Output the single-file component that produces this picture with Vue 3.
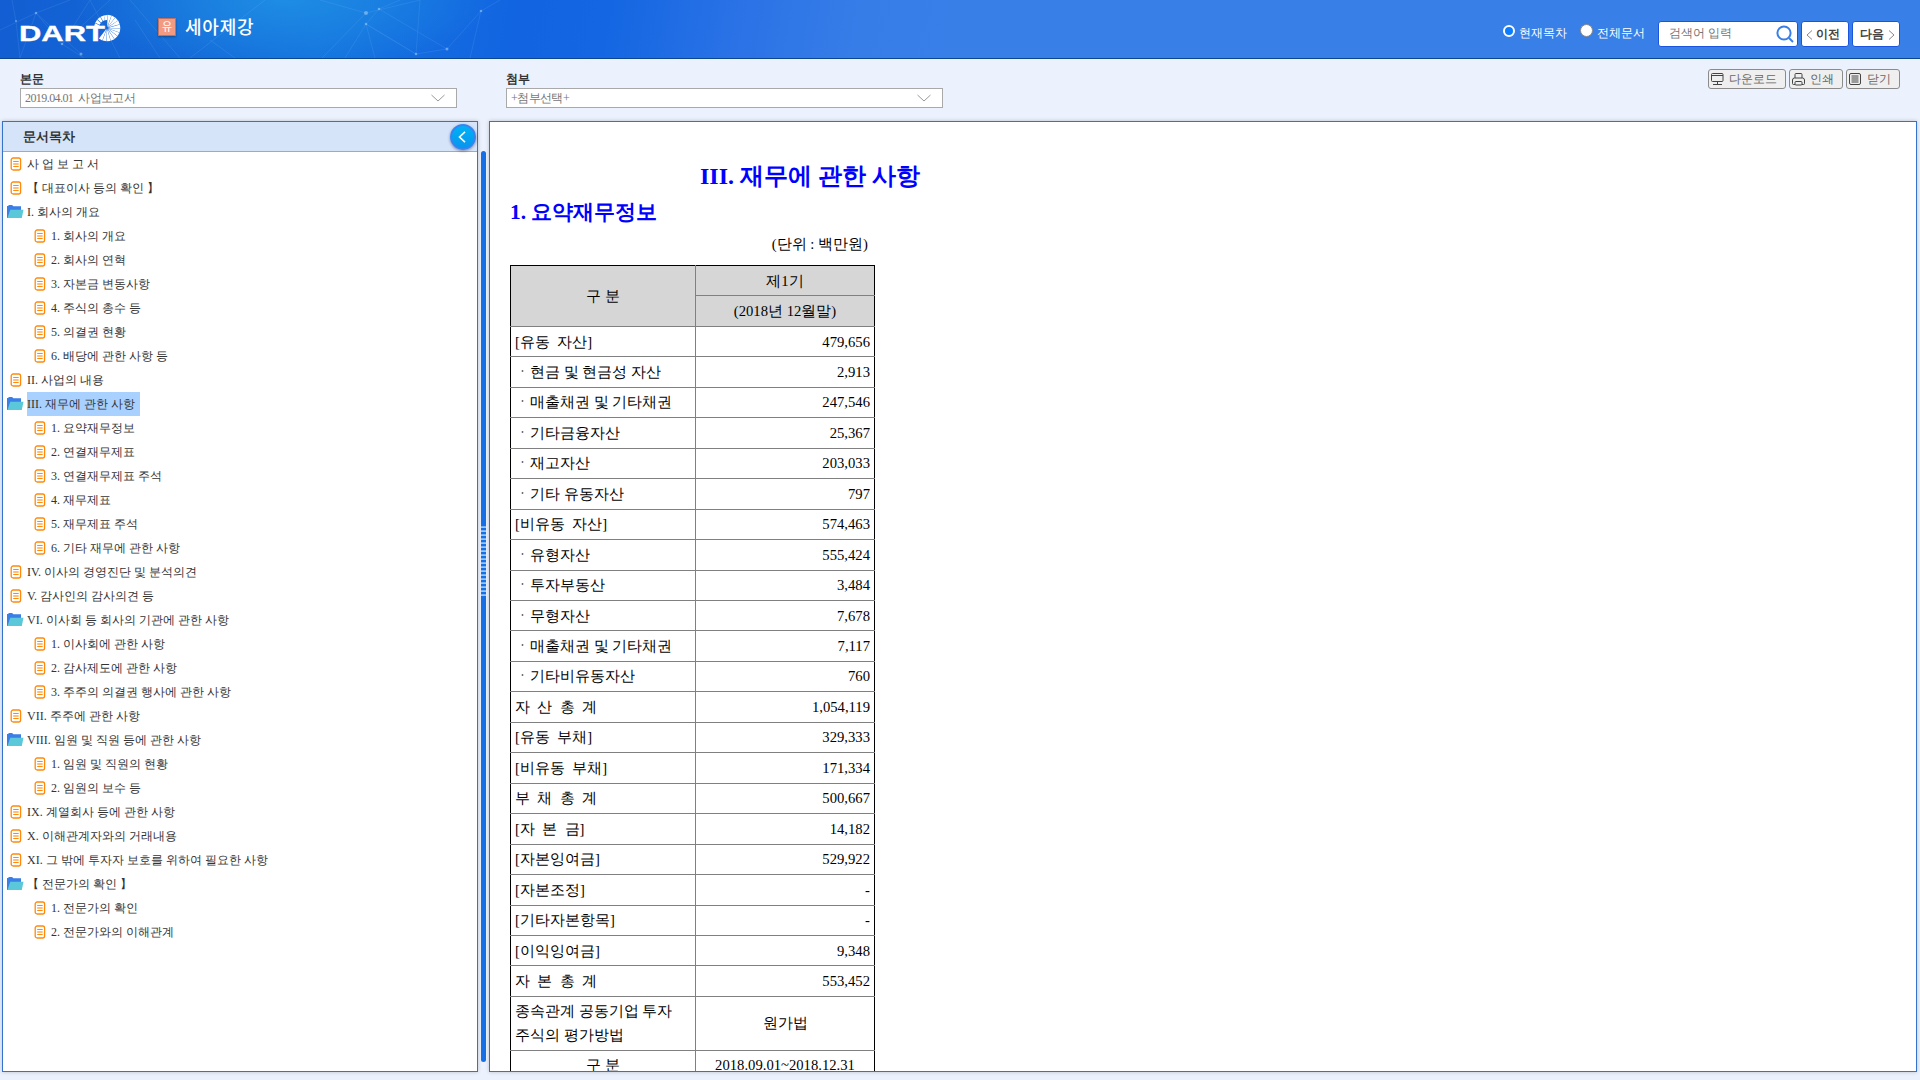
<script setup>
const toc = [
  [0, '사 업 보 고 서'], [0, '【 대표이사 등의 확인 】'],
  [1, 'I. 회사의 개요'],
  [2, '1. 회사의 개요'], [2, '2. 회사의 연혁'], [2, '3. 자본금 변동사항'],
  [2, '4. 주식의 총수 등'], [2, '5. 의결권 현황'], [2, '6. 배당에 관한 사항 등'],
  [0, 'II. 사업의 내용'],
  [1, 'III. 재무에 관한 사항', true],
  [2, '1. 요약재무정보'], [2, '2. 연결재무제표'], [2, '3. 연결재무제표 주석'],
  [2, '4. 재무제표'], [2, '5. 재무제표 주석'], [2, '6. 기타 재무에 관한 사항'],
  [0, 'IV. 이사의 경영진단 및 분석의견'], [0, 'V. 감사인의 감사의견 등'],
  [1, 'VI. 이사회 등 회사의 기관에 관한 사항'],
  [2, '1. 이사회에 관한 사항'], [2, '2. 감사제도에 관한 사항'], [2, '3. 주주의 의결권 행사에 관한 사항'],
  [0, 'VII. 주주에 관한 사항'],
  [1, 'VIII. 임원 및 직원 등에 관한 사항'],
  [2, '1. 임원 및 직원의 현황'], [2, '2. 임원의 보수 등'],
  [0, 'IX. 계열회사 등에 관한 사항'], [0, 'X. 이해관계자와의 거래내용'],
  [0, 'XI. 그 밖에 투자자 보호를 위하여 필요한 사항'],
  [1, '【 전문가의 확인 】'],
  [2, '1. 전문가의 확인'], [2, '2. 전문가와의 이해관계']
].map(([kind, text, on]) => ({ kind, text, on }))

const rows = [
  ['[유동  자산]', '479,656'], ['ㆍ현금 및 현금성 자산', '2,913'],
  ['ㆍ매출채권 및 기타채권', '247,546'], ['ㆍ기타금융자산', '25,367'],
  ['ㆍ재고자산', '203,033'], ['ㆍ기타 유동자산', '797'],
  ['[비유동  자산]', '574,463'], ['ㆍ유형자산', '555,424'],
  ['ㆍ투자부동산', '3,484'], ['ㆍ무형자산', '7,678'],
  ['ㆍ매출채권 및 기타채권', '7,117'], ['ㆍ기타비유동자산', '760'],
  ['자  산  총  계', '1,054,119'], ['[유동  부채]', '329,333'],
  ['[비유동  부채]', '171,334'], ['부  채  총  계', '500,667'],
  ['[자  본  금]', '14,182'], ['[자본잉여금]', '529,922'],
  ['[자본조정]', '-'], ['[기타자본항목]', '-'],
  ['[이익잉여금]', '9,348'], ['자  본  총  계', '553,452']
]

const shortRays = [-165, -147, -129, -111, -95]
const longRays = [-78, -60, -42, -24, -6, 12, 30, 48, 66, 84, 102, 120]
</script>

<template>
  <div class="app">
    <header>
      <svg class="net" width="520" height="58" fill="none" stroke="#9fd4ff" stroke-width=".7" opacity=".17">
        <path d="M0 30 36 13 62 44 84 58M16 21 12 0M16 21 20 58M36 13 70 0M36 13 20 58M62 44 110 0M62 44 90 0 120 58M81 54 36 13M130 0 180 58M135 20 160 58M190 58 265 0M210 40 235 58M322 58 366 13 420 0M366 24 379 9 400 0M366 24 345 58M366 24 375 58M366 24 416 54 447 49 481 11M366 13 320 0M379 9 447 49M416 54 420 0M481 11 470 58M366 24 416 54M481 11 500 0" />
      </svg>
      <svg class="net" width="520" height="58" fill="#bfe0ff" opacity=".45"><circle cx="366" cy="13" r="2" /><circle cx="379" cy="9" r="1.3" /><circle cx="366" cy="24" r="1.3" /><circle cx="447" cy="49" r="1.5" /><circle cx="416" cy="54" r="1.3" /><circle cx="481" cy="11" r="1.3" /><circle cx="36" cy="13" r="1.3" /><circle cx="62" cy="44" r="1.3" /><circle cx="81" cy="54" r="1.5" /><circle cx="16" cy="21" r="1" /></svg>
      <svg class="logo" width="104" height="32" viewBox="0 0 104 32">
        <text x="-1" y="26.500" textLength="86" lengthAdjust="spacingAndGlyphs" font-family="Liberation Sans, sans-serif" font-weight="bold" font-size="22.5" fill="#fff" stroke="#fff" stroke-width=".3">DART</text>
        <g transform="translate(87 14)" fill="#fff">
          <path v-for="a in shortRays" :key="a" :transform="`rotate(${a})`" d="M8 -1.200 12.800 -2V1.600L8 .8Z" />
          <path v-for="a in longRays" :key="a" :transform="`rotate(${a})`" d="M1 0 13.200 -2.200V1.700Z" />
        </g>
      </svg>
      <span class="badge">유</span>
      <h1>세아제강</h1>
      <div class="search">
        <i class="radio on"></i><label class="r1">현재목차</label>
        <i class="radio"></i><label class="r2">전체문서</label>
        <div class="input"><span>검색어 입력</span>
          <svg width="18" height="18" fill="none" stroke="#3a7fe8" stroke-width="2"><circle cx="8" cy="8" r="6.6" /><path d="m13 13 4 4" /></svg>
        </div>
        <button class="nav prev"><svg width="7" height="10" fill="none" stroke="#888"><path d="M6 .5 1 5l5 4.5" /></svg>이전</button>
        <button class="nav next">다음<svg width="7" height="10" fill="none" stroke="#888"><path d="m1 .5 5 4.5-5 4.5" /></svg></button>
      </div>
    </header>

    <section class="tools">
      <div class="pick"><b>본문</b><div class="sel">2019.04.01&nbsp; 사업보고서<svg width="14" height="8" fill="none" stroke="#999"><path d="m.5 1 6.5 6 6.5-6" /></svg></div></div>
      <div class="pick"><b>첨부</b><div class="sel">+첨부선택+<svg width="14" height="8" fill="none" stroke="#999"><path d="m.5 1 6.5 6 6.5-6" /></svg></div></div>
      <div class="acts">
        <button class="wide"><svg width="13" height="13" fill="none" stroke="#444"><rect x=".5" y=".5" width="11.5" height="8" rx="1" /><path d="M1 2.5h11M6.5 9v3M2 11.5h9" /></svg>다운로드</button>
        <button><svg width="13" height="13" fill="none" stroke="#444"><path d="M3 5V1.500q0-1 1-1h5q1 0 1 1V5M3 11.500H1.500q-1 0-1-1V7q0-2 2-2h8q2 0 2 2v3.500q0 1-1 1H10" /><rect x="3" y="8.500" width="7" height="3.500" rx="1" /></svg>인쇄</button>
        <button><svg width="13" height="13" fill="none" stroke="#444"><rect x=".5" y=".5" width="11" height="11" rx="1.500" /><path d="M2.500 3h7M2.500 5h7M2.500 7h7M2.500 9h7" /></svg>닫기</button>
      </div>
    </section>

    <main>
      <aside>
        <h2>문서목차
          <span class="fold"><svg width="8" height="12" fill="none" stroke="#fff" stroke-width="1.600"><path d="M7 .8 1.500 6 7 11.200" /></svg></span>
        </h2>
        <ul>
          <li v-for="(n, i) in toc" :key="i" :class="{ sub: n.kind === 2, dir: n.kind === 1 }">
            <svg v-if="n.kind === 1" width="17" height="14"><path d="M0 1h1L2 0h3l1.500 1.300H14V13H0z" fill="#3a7fe8" /><path d="M3.200 4.700h13.300L14.800 13H.5z" fill="#5ac8d8" /></svg>
            <svg v-else width="12" height="14" fill="none" stroke="#ff8a0c"><rect x="1.200" y="1" width="9.400" height="12" rx="2" stroke-width="1.300" /><path d="M3.200 4.500h5.500M3.200 9.500h5.500" /><path d="M3.200 6.500h5.500M3.200 7.500h5.500" opacity=".55" /></svg>
            <span :class="{ on: n.on }">{{ n.text }}</span>
          </li>
        </ul>
      </aside>
      <div class="bar"><i></i></div>
      <article>
        <h3>III. 재무에 관한 사항</h3>
        <h4>1. 요약재무정보</h4>
        <p>(단위 : 백만원)</p>
        <table>
          <colgroup><col class="c1" /><col class="c2" /></colgroup>
          <tbody>
            <tr class="hd"><td rowspan="2">구 분</td><td>제1기</td></tr>
            <tr class="hd"><td>(2018년 12월말)</td></tr>
            <tr v-for="(r, i) in rows" :key="i"><td>{{ r[0] }}</td><td class="num">{{ r[1] }}</td></tr>
            <tr><td>종속관계 공동기업 투자<br />주식의 평가방법</td><td class="mid">원가법</td></tr>
            <tr><td class="mid">구 분</td><td class="mid">2018.09.01~2018.12.31</td></tr>
          </tbody>
        </table>
      </article>
    </main>
  </div>
</template>

<style>
body { margin: 0; overflow: hidden; }
</style>

<style scoped>
* { box-sizing: border-box; }
.app { width: 1920px; height: 1080px; display: flex; flex-direction: column; background: #ebf1fd; color: #333; font: 12px "Liberation Serif", serif; overflow: hidden; }
header { position: relative; height: 59px; flex: none; display: flex; align-items: flex-start; padding-left: 20px; border-bottom: 1px solid #0c4590; background: radial-gradient(ellipse 210px 70px at 285px 0, #1e8ce4, transparent), linear-gradient(100deg, #125ed2 0, #1467d7 160px, #1573de 320px, #1264e1 520px, #1466e2 600px, #2a72e6 730px, #377de8 850px, #397fe8 940px, #397fe8 100%); }
.net { position: absolute; left: 0; top: 0; }
.logo { margin-top: 14px; position: relative; }
.badge { margin: 18px 0 0 34px; width: 18px; height: 18px; background: #f39a83; border: 1px solid #bd7264; color: #fff; font: 11px/15px "Noto Sans CJK KR", sans-serif; text-align: center; position: relative; box-shadow: 0 1px 2px #0005; }
h1 { margin: 12px 0 0 9px; font: 500 18px/29px "Noto Sans CJK KR", sans-serif; letter-spacing: .8px; color: #fff; position: relative; }
.search { margin: 21px 20px 0 auto; display: flex; color: #fff; }
.radio { width: 13px; height: 13px; border-radius: 50%; background: #fff; border: 1px solid #888; margin: 3px 4px 0 0; }
.radio.on { background: #0a7cff; border: 2px solid #fff; width: 12px; height: 12px; margin-top: 4px; }
label { line-height: 24px; white-space: nowrap; }
.r1 { width: 61px; }
.r2 { width: 61px; }
.input { width: 140px; height: 26px; border: 1px solid #1b55dc; border-radius: 3px; background: #fff; color: #757575; padding: 0 3px 0 10px; display: flex; justify-content: space-between; line-height: 23px; }
.input svg { margin-top: 3px; }
.nav { width: 48px; height: 26px; margin: 0 0 0 3px; border: 1px solid #1b55dc; border-radius: 3px; background: #fff; color: #444; font: bold 12px/23px "Liberation Serif", serif; padding: 0 0 0 4px; display: flex; align-items: center; gap: 3px; white-space: nowrap; }
.nav svg { flex: none; margin-top: 1px; }
.nav.next { padding-left: 7px; gap: 4px; }
.tools { display: flex; height: 62px; flex: none; padding: 10px 20px 0; }
.pick { width: 437px; margin-right: 49px; }
.pick b { display: block; height: 19px; line-height: 20px; }
.sel { width: 437px; height: 20px; border: 1px solid #a9a9a9; background: #fff; color: #767676; line-height: 18px; padding: 0 11px 0 4px; display: flex; letter-spacing: -.57px; }
.sel svg { margin: 5px 0 0 auto; }
.acts { margin-left: auto; display: flex; gap: 3px; }
.acts button { width: 54px; height: 20px; border: 1px solid #8b8b8b; border-radius: 3px; background: #efefef; color: #666; font: 12px/18px "Liberation Serif", serif; padding: 0 0 0 2px; display: flex; gap: 5px; white-space: nowrap; }
.acts .wide { width: 78px; }
.acts svg { margin-top: 3px; flex: none; }
main { display: flex; padding-left: 2px; height: 951px; }
aside { width: 476px; border: 1px solid #3373cc; background: #fff; box-shadow: 0 0 4px #0003; }
h2 { margin: 0; height: 30px; border-bottom: 1px solid #a9a9a9; background: #d6e4fa; padding-left: 20px; font-size: 13px; line-height: 29px; position: relative; }
.fold { position: absolute; left: 447px; top: 2px; width: 26px; height: 26px; border-radius: 50%; background: linear-gradient(#00b1f5, #0795ee); border: 2px solid #3a83ee; box-shadow: 0 1px 3px #0006; display: flex; align-items: center; justify-content: center; padding-right: 3px; }
ul { list-style: none; margin: 0; padding: 0; }
li { height: 24px; display: flex; line-height: 24px; padding-left: 7px; white-space: nowrap; }
li svg { margin: 5px 5px 0 0; }
li.dir { padding-left: 4px; }
li.dir svg { margin: 5px 3px 0 0; }
li.sub { padding-left: 31px; }
.on { background: #a8d1ff; padding-right: 5px; }
.bar { width: 5px; height: 911px; margin: 30px 3px 0; border-radius: 3px; background: #166fe4; padding-top: 375px; }
.bar i { display: block; height: 71px; background: repeating-linear-gradient(#73b0f5 0 1px, #9cc5f7 1px 2px, #166fe4 2px 4px); }
article { width: 1428px; border: 1px solid #3373cc; background: #fff; box-shadow: 0 0 4px #0003; padding: 38px 0 0 20px; overflow: hidden; color: #000; font-size: 14.667px; }
h3 { margin: 0; width: 600px; text-align: center; font-size: 24px; line-height: 32px; color: #00f; }
h4 { margin: 4px 0 0; font-size: 21.333px; line-height: 32px; color: #00f; }
p { margin: 4px 0 0; width: 358px; text-align: right; line-height: 24px; height: 33px; }
table { border-collapse: collapse; table-layout: fixed; width: 364px; border: 1px solid #000; line-height: 1.6; white-space: pre; }
.c1 { width: 185px; }
.c2 { width: 179px; }
td { border: 1px solid #808080; padding: 3.6px 4px 2.4px; }
tr td:first-child[rowspan], tr:not(.hd) td:first-child { border-left-color: #000; }
tr td:last-child { border-right-color: #000; }
.hd:first-child td { border-top-color: #000; }
.hd td { background: #d6d6d6; text-align: center; }
.num { text-align: right; }
.mid { text-align: center; }
</style>
